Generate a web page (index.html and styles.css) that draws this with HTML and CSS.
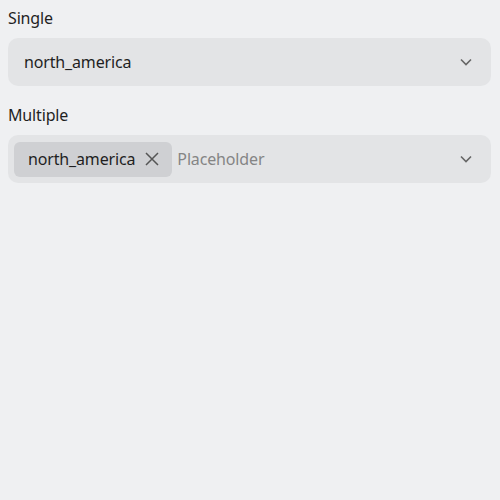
FILE: index.html
```html
<!DOCTYPE html>
<html>
<head>
<meta charset="utf-8">
<link rel="stylesheet" href="styles.css">
</head>
<body>
<div class="page">
  <div class="field">
    <label class="label">Single</label>
    <div class="select">
      <span class="value">north_america</span>
      <svg class="chev" width="12" height="8" viewBox="0 0 12 8"><path d="M1 1.5 L6 6.5 L11 1.5" fill="none" stroke="#666" stroke-width="1.6"/></svg>
    </div>
  </div>
  <div class="field">
    <label class="label">Multiple</label>
    <div class="select multi">
      <span class="chip">north_america
        <svg class="x" width="14" height="14" viewBox="0 0 14 14"><path d="M1 1 L13 13 M13 1 L1 13" stroke="#555" stroke-width="1.5" fill="none"/></svg>
      </span>
      <span class="placeholder">Placeholder</span>
      <svg class="chev" width="12" height="8" viewBox="0 0 12 8"><path d="M1 1.5 L6 6.5 L11 1.5" fill="none" stroke="#666" stroke-width="1.6"/></svg>
    </div>
  </div>
</div>
</body>
</html>
```
FILE: styles.css
```css
html, body { margin: 0; padding: 0; background: #eff0f2; }
body { font-family: "Noto Sans", sans-serif; font-size: 16px; color: #1f1f1f; letter-spacing: -0.15px; }
.page { padding: 6px 9px 0 8px; display: flex; flex-direction: column; gap: 17px; }
.field { display: flex; flex-direction: column; gap: 8px; }
.label { line-height: 24px; }
.select { height: 48px; box-sizing: border-box; background: #e3e4e6; border-radius: 10px; display: flex; align-items: center; padding: 0 19px 0 16px; }
.value { flex: 1; }
.chev { display: block; }
.multi { padding-left: 6px; }
.chip { display: flex; align-items: center; height: 35px; background: #cfd0d3; border-radius: 6px; padding: 0 13px 0 14px; gap: 10px; }
.placeholder { flex: 1; color: #858585; margin-left: 5px; }
```
